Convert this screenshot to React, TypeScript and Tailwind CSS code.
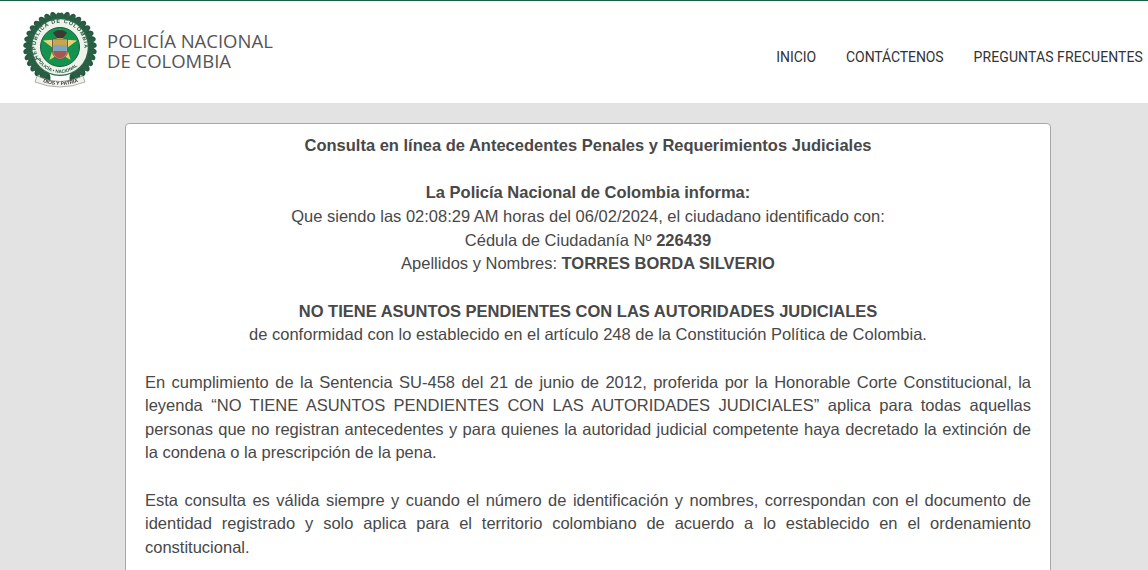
function Logo({ size }: { size: number }) {
  const leaves = Array.from({ length: 15 }, (_, i) => i);
  return (
    <svg width={size} height={size} viewBox="0 0 76 76">
      {[1, -1].map((s) => (
        <g key={s} transform={s < 0 ? "translate(76,0) scale(-1,1)" : ""}>
          {leaves.map((i) => (
            <g key={i} transform={`rotate(${7 + i * 10.5} 38 36)`}>
              <ellipse cx="40" cy="3.8" rx="2.8" ry="4.8" fill="#24573f" transform="rotate(28 40 3.8)" />
              <ellipse cx="36" cy="5" rx="2.6" ry="4.4" fill="#2a5f46" transform="rotate(-18 36 5)" />
            </g>
          ))}
        </g>
      ))}
      <circle cx="38" cy="35" r="29" fill="#2c6a4c" />
      <circle cx="38" cy="35" r="27.8" fill="#eef2ea" />
      <circle cx="38" cy="35" r="19.500" fill="#14924f" stroke="#1b5e43" />
      <defs>
        <path id="ringTop" d="M17.2 47.600A24.300 24.300 0 1 1 58.800 47.600" />
        <path id="ringBottom" d="M12.500 40A26 26 0 0 0 63.500 40" />
        <path id="ribbon" d="M18 69q20 8 40 0" />
      </defs>
      <text className="font-['Liberation_Sans',sans-serif] font-bold" fontSize="5.4" letterSpacing="0.9" fill="#20523b">
        <textPath href="#ringTop" startOffset="1">REPÚBLICA DE COLOMBIA</textPath>
      </text>
      <text className="font-['Liberation_Sans',sans-serif] font-bold" fontSize="4.6" fill="#20523b">
        <textPath href="#ringBottom" startOffset="8">POLICÍA • NACIONAL</textPath>
      </text>
      <path d="M38 17l3.800 10.500 13.200 1-10 7.500 3.600 12-10.600-6.500L27.400 48l3.600-12-10-7.500 13.200-1z" fill="#e5d271" />
      <path d="M30.500 27h15v12c0 5-3.600 7.500-7.500 8.500-3.900-1-7.500-3.500-7.500-8.500z" fill="#c8b889" stroke="#5a4c3a" strokeWidth="0.8" />
      <rect x="31.200" y="28" width="13.600" height="5" fill="#c9a54f" />
      <rect x="31.200" y="33" width="13.600" height="6" fill="#7da6bf" />
      <path d="M31.200 39h13.600c0 4-3 6.800-6.800 7.800-3.800-1-6.800-3.800-6.800-7.800z" fill="#a9574e" />
      <path d="M31 21c3-4 11-4 14 0l-4 5h-6z" fill="#3b3a34" />
      <path d="M15 64q23 11 46 0l2 6q-25 10-50 0z" fill="#f2f2ec" stroke="#8b8f86" strokeWidth="0.7" />
      <text className="font-['Liberation_Sans',sans-serif] font-bold" fontSize="5" fill="#333333">
        <textPath href="#ribbon" startOffset="3">DIOS Y PATRIA</textPath>
      </text>
    </svg>
  );
}

export default function App() {
  return (
    <div className="h-[570px] overflow-hidden bg-[#e3e3e3] font-['Liberation_Sans',Arial,sans-serif] text-[16.5px] leading-[23.65px] text-[#484848]">
      <header className="flex h-[103px] items-center justify-between border-t border-[#1b5e43] bg-white pr-[5px]">
        <div className="flex items-center pl-[22px]">
          <div className="mb-[5px] blur-[0.3px]"><Logo size={76} /></div>
          <div className="mb-[2px] ml-[9px] font-['Open_Sans',sans-serif] text-[18.5px] leading-[20px] text-[#555555]">
            <div>POLICÍA NACIONAL</div>
            <div>DE COLOMBIA</div>
          </div>
        </div>
        <nav className="mt-[12px] flex gap-[30px] font-['Roboto',sans-serif] text-[14px] text-[#333333]">
          <a className="tracking-[-0.05px]">INICIO</a>
          <a className="tracking-[-0.1px]">CONTÁCTENOS</a>
          <a className="tracking-[0.1px]">PREGUNTAS FRECUENTES</a>
        </nav>
      </header>
      <main className="relative ml-[125px] mt-[20px] h-[480px] w-[926px] rounded-t-[4px] border border-[#a8a8a8] bg-white px-[19px] pt-[10px]">
        <div className="text-center">
          <p className="font-bold">Consulta en línea de Antecedentes Penales y Requerimientos Judiciales</p>
          <p className="mt-[23.65px] font-bold">La Policía Nacional de Colombia informa:</p>
          <p>Que siendo las 02:08:29 AM horas del 06/02/2024, el ciudadano identificado con:</p>
          <p>Cédula de Ciudadanía Nº <b>226439</b></p>
          <p>Apellidos y Nombres: <b>TORRES BORDA SILVERIO</b></p>
          <p className="mt-[23.65px] font-bold">NO TIENE ASUNTOS PENDIENTES CON LAS AUTORIDADES JUDICIALES</p>
          <p>de conformidad con lo establecido en el artículo 248 de la Constitución Política de Colombia.</p>
        </div>
        <p className="mt-[23.65px] text-justify">
          En cumplimiento de la Sentencia SU-458 del 21 de junio de 2012, proferida por la Honorable Corte Constitucional, la leyenda “NO TIENE ASUNTOS PENDIENTES CON LAS AUTORIDADES JUDICIALES” aplica para todas aquellas personas que no registran antecedentes y para quienes la autoridad judicial competente haya decretado la extinción de la condena o la prescripción de la pena.
        </p>
        <p className="mt-[23.65px] text-justify">
          Esta consulta es válida siempre y cuando el número de identificación y nombres, correspondan con el documento de identidad registrado y solo aplica para el territorio colombiano de acuerdo a lo establecido en el ordenamiento constitucional.
        </p>
      </main>
    </div>
  );
}
